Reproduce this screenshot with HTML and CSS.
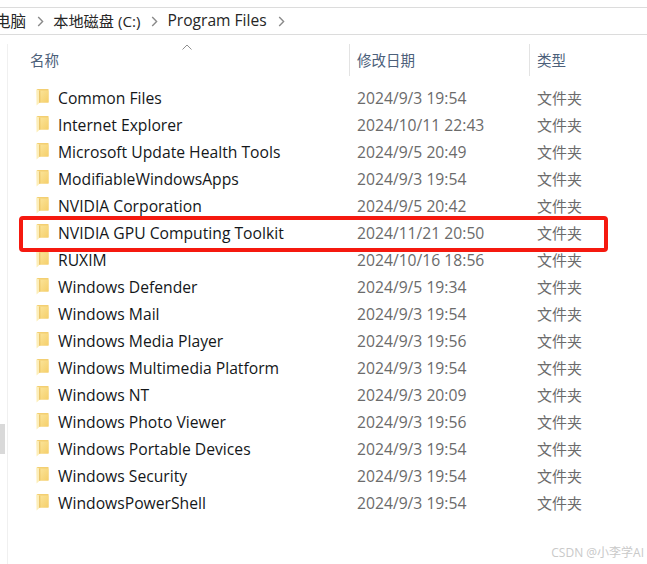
FILE: index.html
```html
<!DOCTYPE html>
<html lang="zh">
<head>
<meta charset="utf-8">
<title>Program Files</title>
<link rel="stylesheet" href="styles.css">
</head>
<body>
<svg class="defs" width="0" height="0" aria-hidden="true">
  <defs>
    <linearGradient id="fg" x1="0" y1="0" x2="1" y2="1">
      <stop offset="0" stop-color="#fbe49a"/>
      <stop offset="1" stop-color="#f5cf6a"/>
    </linearGradient>
    <symbol id="folder" viewBox="0 0 13 17">
      <path d="M1 0H12.5V13.5H1Z" fill="#f3cf72"/>
      <path d="M3.5 1.5H12.5V13.5H3.5Z" fill="url(#fg)"/>
      <path d="M0.2 0.3L3.6 1.6V13.7L0.6 16.6Z" fill="#fdeeb8"/>
      <path d="M3.4 1.4L4.2 1.8V13.6L3.4 14Z" fill="#e2b24c"/>
    </symbol>
    <symbol id="chev" viewBox="0 0 7 11">
      <path d="M1.2 1L5.6 5.5L1.2 10" fill="none" stroke="#8a8a8a" stroke-width="1.4"/>
    </symbol>
  </defs>
</svg>
<div class="window">
  <nav class="crumbs">
    <span class="crumb first">电脑</span>
    <svg class="chev"><use href="#chev"/></svg>
    <span class="crumb drive">本地磁盘 (C:)</span>
    <svg class="chev"><use href="#chev"/></svg>
    <span class="crumb">Program Files</span>
    <svg class="chev"><use href="#chev"/></svg>
  </nav>
  <div class="thumb"></div>
  <main class="pane">
    <div class="head">
      <div class="hcell hname">名称<svg class="sort" viewBox="0 0 10 6"><path d="M0.5 5.5L5 1L9.5 5.5" fill="none" stroke="#8f8f8f"/></svg></div>
      <div class="hcell hdate">修改日期</div>
      <div class="hcell htype">类型</div>
    </div>
    <div class="rows">
      <div class="row"><svg class="ico"><use href="#folder"/></svg><span class="name">Common Files</span><span class="date">2024/9/3 19:54</span><span class="type">文件夹</span></div>
      <div class="row"><svg class="ico"><use href="#folder"/></svg><span class="name">Internet Explorer</span><span class="date">2024/10/11 22:43</span><span class="type">文件夹</span></div>
      <div class="row"><svg class="ico"><use href="#folder"/></svg><span class="name">Microsoft Update Health Tools</span><span class="date">2024/9/5 20:49</span><span class="type">文件夹</span></div>
      <div class="row"><svg class="ico"><use href="#folder"/></svg><span class="name">ModifiableWindowsApps</span><span class="date">2024/9/3 19:54</span><span class="type">文件夹</span></div>
      <div class="row"><svg class="ico"><use href="#folder"/></svg><span class="name">NVIDIA Corporation</span><span class="date">2024/9/5 20:42</span><span class="type">文件夹</span></div>
      <div class="row marked"><svg class="ico"><use href="#folder"/></svg><span class="name">NVIDIA GPU Computing Toolkit</span><span class="date">2024/11/21 20:50</span><span class="type">文件夹</span></div>
      <div class="row"><svg class="ico"><use href="#folder"/></svg><span class="name">RUXIM</span><span class="date">2024/10/16 18:56</span><span class="type">文件夹</span></div>
      <div class="row"><svg class="ico"><use href="#folder"/></svg><span class="name">Windows Defender</span><span class="date">2024/9/5 19:34</span><span class="type">文件夹</span></div>
      <div class="row"><svg class="ico"><use href="#folder"/></svg><span class="name">Windows Mail</span><span class="date">2024/9/3 19:54</span><span class="type">文件夹</span></div>
      <div class="row"><svg class="ico"><use href="#folder"/></svg><span class="name">Windows Media Player</span><span class="date">2024/9/3 19:56</span><span class="type">文件夹</span></div>
      <div class="row"><svg class="ico"><use href="#folder"/></svg><span class="name">Windows Multimedia Platform</span><span class="date">2024/9/3 19:54</span><span class="type">文件夹</span></div>
      <div class="row"><svg class="ico"><use href="#folder"/></svg><span class="name">Windows NT</span><span class="date">2024/9/3 20:09</span><span class="type">文件夹</span></div>
      <div class="row"><svg class="ico"><use href="#folder"/></svg><span class="name">Windows Photo Viewer</span><span class="date">2024/9/3 19:56</span><span class="type">文件夹</span></div>
      <div class="row"><svg class="ico"><use href="#folder"/></svg><span class="name">Windows Portable Devices</span><span class="date">2024/9/3 19:54</span><span class="type">文件夹</span></div>
      <div class="row"><svg class="ico"><use href="#folder"/></svg><span class="name">Windows Security</span><span class="date">2024/9/3 19:54</span><span class="type">文件夹</span></div>
      <div class="row"><svg class="ico"><use href="#folder"/></svg><span class="name">WindowsPowerShell</span><span class="date">2024/9/3 19:54</span><span class="type">文件夹</span></div>
    </div>
  </main>
  <div class="mark"></div>
  <div class="watermark">CSDN @小李学AI</div>
</div>
</body>
</html>
```
FILE: styles.css
```css
* { box-sizing: border-box; }
html, body { margin: 0; padding: 0; background: #fff; }
body {
  width: 647px;
  height: 564px;
  overflow: hidden;
  font-family: "Open Sans", "Noto Sans CJK SC", sans-serif;
  font-size: 15.7px;
  color: #1a1a1a;
}
.defs { position: absolute; }
.window { position: relative; width: 647px; height: 564px; padding-top: 7px; overflow: hidden; }
.crumbs {
  height: 28px;
  border-top: 1px solid #dcdcdc;
  border-bottom: 1px solid #dcdcdc;
  display: flex;
  align-items: center;
  color: #262626;
  font-size: 15.6px;
}
.crumb { white-space: nowrap; position: relative; top: -1px; }
.crumb.first { margin-left: -5px; }
.crumb.drive { font-size: 15.2px; }
.chev { width: 7px; height: 11px; margin: 0 9px 0 11px; }
.pane {
  margin-left: 7px;
  margin-top: 9px;
  height: 520px;
  border-left: 1px solid #f0f0f0;
}
.head {
  display: grid;
  grid-template-columns: 341px 180px 1fr;
  height: 32px;
  margin-bottom: 8px;
  color: #4c607a;
}
.hcell {
  position: relative;
  display: flex;
  align-items: center;
  padding-left: 7px;
  padding-bottom: 2px;
  font-size: 14.5px;
  white-space: nowrap;
}
.hname { padding-left: 22px; }
.hdate, .htype { border-left: 1px solid #e3e3e3; }
.sort { position: absolute; left: 174px; top: 0; width: 10px; height: 6px; }
.rows { display: flex; flex-direction: column; }
.row {
  display: grid;
  grid-template-columns: 13px 308px 180px 1fr;
  height: 27px;
  align-items: center;
  padding-left: 28px;
  white-space: nowrap;
}
.ico { width: 13px; height: 17px; margin-top: 0; }
.name { padding-left: 9px; color: #14171a; }
.date, .type { color: #6b6b6b; }
.type { font-size: 15px; }
.mark {
  position: absolute;
  left: 19px;
  top: 216px;
  width: 589px;
  height: 36px;
  border: 4px solid #f5190f;
  border-radius: 4px;
}
.thumb { position: absolute; left: 0; top: 424px; width: 5px; height: 30px; background: #d9d9d9; }
.watermark {
  position: absolute;
  right: 3px;
  bottom: 4px;
  font-size: 12px;
  line-height: 14px;
  color: #c9c9c9;
}
```
